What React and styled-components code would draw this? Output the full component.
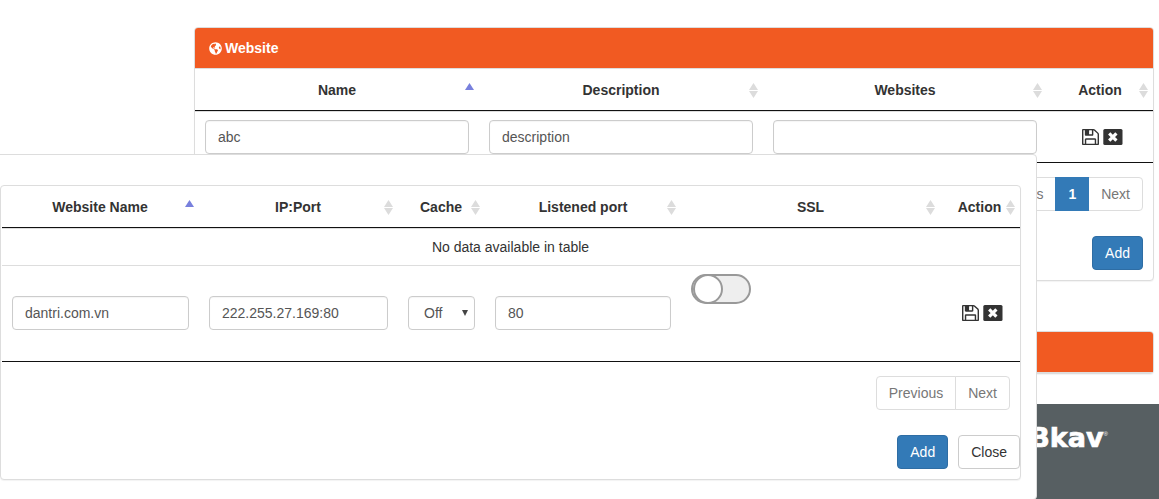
import React from 'react';
import styled, { createGlobalStyle, css } from 'styled-components';
import { FaGlobeAmericas } from 'react-icons/fa';

const GlobalStyle = createGlobalStyle`
  *, *::before, *::after { box-sizing: border-box; }
  body {
    margin: 0;
    background: #fff;
    color: #333;
    font: 14px/20px "Liberation Sans", Arial, sans-serif;
    overflow: hidden;
  }
  input, select, button { font: inherit; margin: 0; }
`;

const Page = styled.div`
  position: relative;
  height: 499px;
  overflow: hidden;
  display: flex;
  flex-direction: column;
`;

const Content = styled.main`
  flex: none;
  height: 404px;
  padding: 27px 5px 0 194px;
  display: flex;
  flex-direction: column;
  gap: 50px;
`;

const Panel = styled.section`
  background: #fff;
  border: 1px solid #ddd;
  border-radius: 4px;
  box-shadow: 0 1px 1px rgba(0, 0, 0, 0.05);
`;

const PanelHeading = styled.header`
  display: flex;
  align-items: center;
  gap: 3px;
  height: 41px;
  padding: 0 14px;
  background: #f15a22;
  background-clip: padding-box;
  color: #fff;
  font-weight: bold;
  border-radius: 3px 3px 0 0;
  border-bottom: 1px solid #ddd;
`;

const Grid = styled.div`
  display: grid;
  grid-template-columns: ${(p) => p.$columns};
  border-bottom: 1px solid #111;
  margin-left: ${(p) => p.$inset || 0}px;
`;

const HeadCell = styled.div`
  display: flex;
  align-items: center;
  justify-content: center;
  height: ${(p) => p.$height}px;
  padding: 0 ${(p) => p.$end}px 0 10px;
  position: relative;
  font-weight: bold;
  white-space: nowrap;
`;

const SortMark = styled.svg`
  position: absolute;
  right: ${(p) => p.$right}px;
  top: ${(p) => p.$top}px;
  width: 9px;
  height: 15px;
`;

const Body = styled(Grid)`
  border-top: 1px solid #ddd;
  height: ${(p) => p.$height}px;
  align-items: center;
`;

const Cell = styled.div`
  display: flex;
  align-items: center;
  padding: 0 10px;
  ${(p) => p.$top && css`align-self: start; padding-top: 8px;`}
  ${(p) => p.$icons && css`gap: 4px; padding: 0 0 0 ${p.$icons}px;`}
  ${(p) => p.$lifted && css`padding-bottom: 2px;`}
`;

const EmptyRow = styled.div`
  height: 37px;
  border-top: 1px solid #ddd;
  margin-left: 1px;
  padding: 8px 1px 0 0;
  text-align: center;
`;

const Control = css`
  display: block;
  width: 100%;
  height: 34px;
  padding: 6px 12px;
  color: #555;
  background: #fff;
  border: 1px solid #ccc;
  border-radius: 4px;
  box-shadow: inset 0 1px 1px rgba(0, 0, 0, 0.045);
  outline: none;
`;

const TextInput = styled.input`
  ${Control}
`;

const Select = styled.div`
  ${Control}
  display: flex;
  align-items: center;
  justify-content: space-between;
  padding: 0 6px 0 15px;
`;

const Caret = styled.svg`
  width: 6px;
  height: 6px;
`;

const Toggle = styled.span`
  display: block;
  width: 60px;
  height: 30px;
  border: 2px solid #999;
  border-radius: 15px;
  background: #eee;
`;

const Knob = styled.span`
  display: block;
  width: 30px;
  height: 30px;
  margin: -2px 0 0 0;
  border: 2px solid #999;
  border-radius: 50%;
  background: #fff;
`;

const Pager = styled.div`
  display: flex;
  justify-content: flex-end;
  padding: 14px 10px 0 0;
`;

const PageLink = styled.a`
  height: 34px;
  padding: 6px 12px;
  border: 1px solid #ddd;
  margin-left: -1px;
  color: #777;
  background: #fff;
  &:first-child { border-radius: 4px 0 0 4px; }
  &:last-child { border-radius: 0 4px 4px 0; }
  ${(p) => p.$active && css`
    z-index: 1;
    font-weight: bold;
    color: #fff;
    background: #337ab7;
    border-color: #337ab7;
  `}
`;

const Actions = styled.div`
  display: flex;
  justify-content: flex-end;
  gap: 10px;
  padding: 25px ${(p) => p.$end}px 10px 0;
`;

const Button = styled.button`
  height: 34px;
  padding: 0 12px;
  border: 1px solid ${(p) => (p.$primary ? '#2e6da4' : '#ccc')};
  border-radius: 4px;
  color: ${(p) => (p.$primary ? '#fff' : '#333')};
  background: ${(p) => (p.$primary ? '#337ab7' : '#fff')};
`;

const Footer = styled.footer`
  flex: 1;
  display: flex;
  justify-content: flex-end;
  padding: 19px 51px 0 0;
  background: #575f62;
  color: #fff;
`;

const Brand = styled.div`
  display: flex;
  align-items: flex-start;
  font: bold 27px/30px "DejaVu Sans", sans-serif;
  -webkit-text-stroke: 0.7px #fff;
`;

const Registered = styled.sup`
  font: 6px/6px "Liberation Sans", sans-serif;
  margin-top: 8px;
  -webkit-text-stroke: 0;
`;

const Dialog = styled.div`
  position: absolute;
  left: -10px;
  top: 154px;
  width: 1047px;
  height: 346px;
  padding: 30px 15px 0 9px;
  background: #fff;
  border: 1px solid #ddd;
  border-radius: 4px;
`;

const Glyph = styled.svg`
  display: block;
  flex: none;
`;

const SaveIcon = () => (
  <Glyph width="17" height="16" viewBox="0 0 1536 1536" preserveAspectRatio="none" fill="#333">
    <path
      transform="translate(0 1408) scale(1 -1)"
      d="M384 0h768v384h-768v-384zM1280 0h128v896q0 14-10 38.5t-20 34.5l-281 281q-10 10-34 20t-39 10v-416q0-40-28-68t-68-28h-576q-40 0-68 28t-28 68v416h-128v-1280h128v416q0 40 28 68t68 28h832q40 0 68-28t28-68v-416zM896 928v320q0 13-9.5 22.5t-22.5 9.5h-192q-13 0-22.5-9.5t-9.5-22.5v-320q0-13 9.5-22.5t22.5-9.5h192q13 0 22.5 9.5t9.5 22.5zM1536 896v-928q0-40-28-68t-68-28h-1344q-40 0-68 28t-28 68v1344q0 40 28 68t68 28h928q40 0 88-20t76-48l280-280q28-28 48-76t20-88z"
      fillRule="evenodd"
    />
  </Glyph>
);

const DeleteIcon = () => (
  <Glyph width="20" height="16" viewBox="0 0 20 16">
    <rect x=".3" width="19.2" height="16" rx="1.5" fill="#333" />
    <path d="M6.2 4.4l7.2 7.2M13.4 4.4l-7.2 7.2" stroke="#fff" strokeWidth="3.2" />
  </Glyph>
);

const Sort = ({ active, right, top }) => (
  <SortMark viewBox="0 0 9 15" $right={right} $top={top}>
    <path d="M0 7L4.5 0L9 7z" fill={active ? '#7880dd' : '#dcdcdc'} />
    {!active && <path d="M0 8h9L4.5 15z" fill="#dcdcdc" />}
  </SortMark>
);

const Head = ({ columns, widths, height, inset }) => (
  <Grid $columns={widths} $inset={inset}>
    {columns.map(([label, right, end, active]) => (
      <HeadCell key={label} $height={height} $end={end}>
        {label}
        <Sort active={active} right={right} top={14} />
      </HeadCell>
    ))}
  </Grid>
);

const siteWidths = '284px 284px 284px 106px';
const hostWidths = '197px 199px 87px 196px 259px 80px';

export default function App() {
  return (
    <Page>
      <GlobalStyle />
      <Content>
        <Panel>
          <PanelHeading>
            <FaGlobeAmericas size={13} />
            Website
          </PanelHeading>
          <Head
            widths={siteWidths}
            height={41}
            columns={[['Name', 5, 10, true], ['Description', 5, 10], ['Websites', 5, 10], ['Action', 5, 10]]}
          />
          <Body $columns={siteWidths} $height={52}>
            <Cell><TextInput defaultValue="abc" /></Cell>
            <Cell><TextInput defaultValue="description" /></Cell>
            <Cell><TextInput /></Cell>
            <Cell $icons={35}><SaveIcon /><DeleteIcon /></Cell>
          </Body>
          <Pager>
            <PageLink>Previous</PageLink>
            <PageLink $active>1</PageLink>
            <PageLink>Next</PageLink>
          </Pager>
          <Actions $end={10}><Button $primary>Add</Button></Actions>
        </Panel>
        <Panel><PanelHeading /></Panel>
      </Content>
      <Footer>
        <Brand>Bkav<Registered>®</Registered></Brand>
      </Footer>
      <Dialog>
        <Panel>
          <Head
            widths={hostWidths}
            inset={1}
            height={41}
            columns={[
              ['Website Name', 5, 11, true],
              ['IP:Port', 5, 11],
              ['Cache', 5, 11],
              ['Listened port', 5, 10],
              ['SSL', 5, 10],
              ['Action', 5, 11],
            ]}
          />
          <EmptyRow>No data available in table</EmptyRow>
          <Body $columns={hostWidths} $height={97} $inset={1}>
            <Cell $lifted><TextInput defaultValue="dantri.com.vn" /></Cell>
            <Cell $lifted><TextInput defaultValue="222.255.27.169:80" /></Cell>
            <Cell $lifted>
              <Select>
                Off
                <Caret viewBox="0 0 6 6"><path d="M0 0h6L3 6z" fill="#444" /></Caret>
              </Select>
            </Cell>
            <Cell $lifted><TextInput defaultValue="80" /></Cell>
            <Cell $top><Toggle><Knob /></Toggle></Cell>
            <Cell $icons={22} $lifted><SaveIcon /><DeleteIcon /></Cell>
          </Body>
          <Pager>
            <PageLink>Previous</PageLink>
            <PageLink>Next</PageLink>
          </Pager>
          <Actions $end={0}>
            <Button $primary>Add</Button>
            <Button>Close</Button>
          </Actions>
        </Panel>
      </Dialog>
    </Page>
  );
}
